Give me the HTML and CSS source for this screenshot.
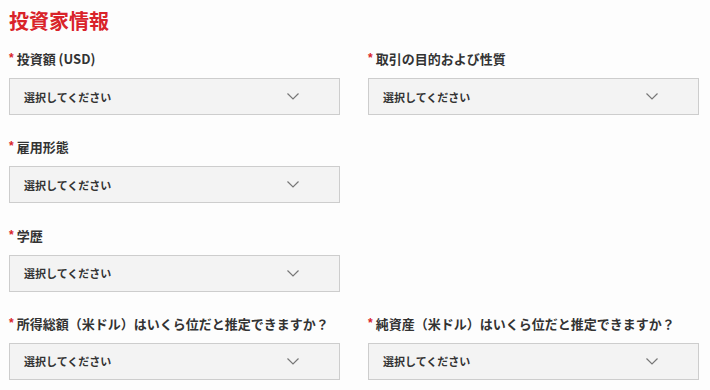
FILE: index.html
```html
<!DOCTYPE html>
<html lang="ja">
<head>
<meta charset="utf-8">
<link rel="stylesheet" href="styles.css">
</head>
<body>
<div class="page">
  <h1 class="title">投資家情報</h1>
  <div class="grid">
    <div class="field">
      <div class="label"><span class="req">*</span>投資額 (USD)</div>
      <div class="select"><span>選択してください</span><svg class="chev" width="12" height="7" viewBox="0 0 12 7"><polyline points="0.5,0.5 6,6 11.5,0.5" fill="none" stroke="#777" stroke-width="1.2"/></svg></div>
    </div>
    <div class="field">
      <div class="label"><span class="req">*</span>取引の目的および性質</div>
      <div class="select"><span>選択してください</span><svg class="chev" width="12" height="7" viewBox="0 0 12 7"><polyline points="0.5,0.5 6,6 11.5,0.5" fill="none" stroke="#777" stroke-width="1.2"/></svg></div>
    </div>
    <div class="field">
      <div class="label"><span class="req">*</span>雇用形態</div>
      <div class="select"><span>選択してください</span><svg class="chev" width="12" height="7" viewBox="0 0 12 7"><polyline points="0.5,0.5 6,6 11.5,0.5" fill="none" stroke="#777" stroke-width="1.2"/></svg></div>
    </div>
    <div class="field empty"></div>
    <div class="field">
      <div class="label"><span class="req">*</span>学歴</div>
      <div class="select"><span>選択してください</span><svg class="chev" width="12" height="7" viewBox="0 0 12 7"><polyline points="0.5,0.5 6,6 11.5,0.5" fill="none" stroke="#777" stroke-width="1.2"/></svg></div>
    </div>
    <div class="field empty"></div>
    <div class="field">
      <div class="label"><span class="req">*</span>所得総額（米ドル）はいくら位だと推定できますか？</div>
      <div class="select"><span>選択してください</span><svg class="chev" width="12" height="7" viewBox="0 0 12 7"><polyline points="0.5,0.5 6,6 11.5,0.5" fill="none" stroke="#777" stroke-width="1.2"/></svg></div>
    </div>
    <div class="field">
      <div class="label"><span class="req">*</span>純資産（米ドル）はいくら位だと推定できますか？</div>
      <div class="select"><span>選択してください</span><svg class="chev" width="12" height="7" viewBox="0 0 12 7"><polyline points="0.5,0.5 6,6 11.5,0.5" fill="none" stroke="#777" stroke-width="1.2"/></svg></div>
    </div>
  </div>
</div>
</body>
</html>
```
FILE: styles.css
```css
html, body {
  margin: 0;
  padding: 0;
  background: #fdfdfd;
}
.page {
  padding: 9px 11px 0 9px;
  font-family: "Noto Sans CJK JP", "Noto Sans", sans-serif;
  color: #333;
}
.title {
  margin: 0;
  font-size: 20px;
  line-height: 24px;
  font-weight: 700;
  color: #d9232a;
}
.grid {
  margin-top: 16px;
  display: grid;
  grid-template-columns: 331px 331px;
  column-gap: 28px;
  row-gap: 22.33px;
}
.label {
  height: 20px;
  font-size: 13px;
  line-height: 20px;
  font-weight: 700;
  color: #333;
  white-space: nowrap;
  margin-bottom: 9px;
}
.req {
  color: #d9232a;
  font-family: "Liberation Sans", sans-serif;
  font-size: 12px;
  line-height: 0;
  margin-right: 3px;
  position: relative;
  top: -2px;
}
.select {
  box-sizing: border-box;
  height: 37px;
  background: #f3f3f3;
  border: 1px solid #cdcdcd;
  display: flex;
  align-items: center;
  justify-content: space-between;
  padding: 0 40px 0 14px;
  font-size: 11px;
  font-weight: 700;
  color: #333;
}
.chev {
  display: block;
}
```
